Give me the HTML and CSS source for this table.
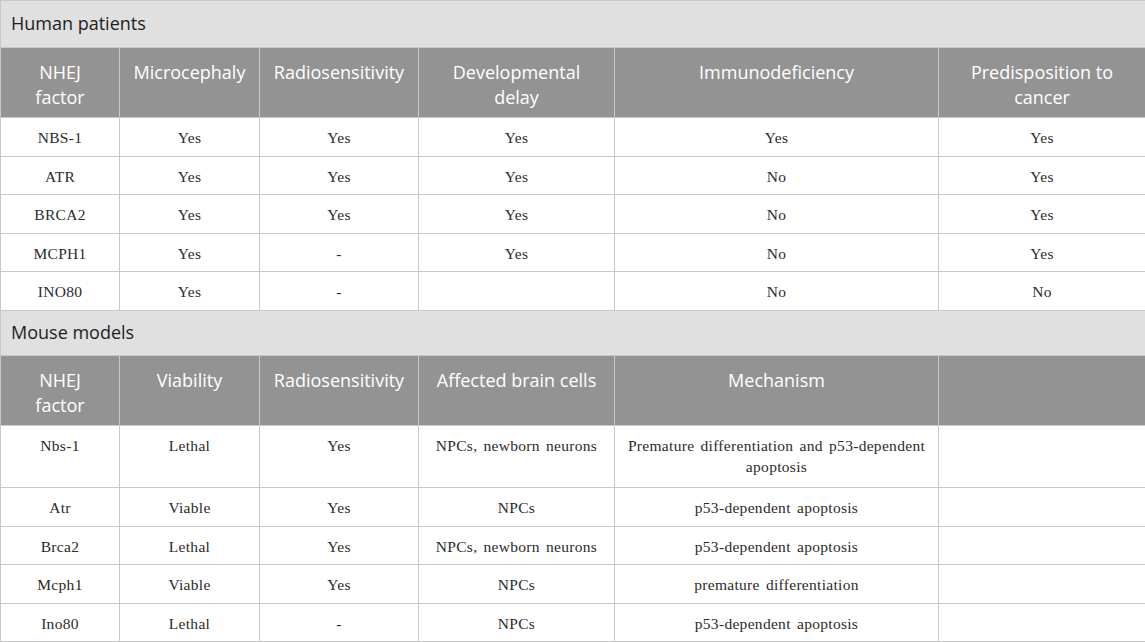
FILE: index.html
```html
<!DOCTYPE html>
<html lang="en">
<head>
    <meta charset="UTF-8">
    <title>NHEJ factors table</title>
    <link rel="stylesheet" href="styles.css">
</head>
<body>

    <table class="data-table">
        <colgroup>
            <col class="c1"><col class="c2"><col class="c3"><col class="c4"><col class="c5"><col class="c6">
        </colgroup>

        <!-- Human patients -->
        <tr class="section first"><td colspan="6">Human patients</td></tr>
        <tr class="head">
            <th>NHEJ factor</th>
            <th>Microcephaly</th>
            <th>Radiosensitivity</th>
            <th>Developmental delay</th>
            <th>Immunodeficiency</th>
            <th>Predisposition to cancer</th>
        </tr>
        <tr><td>NBS-1</td><td>Yes</td><td>Yes</td><td>Yes</td><td>Yes</td><td>Yes</td></tr>
        <tr><td>ATR</td><td>Yes</td><td>Yes</td><td>Yes</td><td>No</td><td>Yes</td></tr>
        <tr><td>BRCA2</td><td>Yes</td><td>Yes</td><td>Yes</td><td>No</td><td>Yes</td></tr>
        <tr><td>MCPH1</td><td>Yes</td><td>-</td><td>Yes</td><td>No</td><td>Yes</td></tr>
        <tr><td>INO80</td><td>Yes</td><td>-</td><td></td><td>No</td><td>No</td></tr>

        <!-- Mouse models -->
        <tr class="section"><td colspan="6">Mouse models</td></tr>
        <tr class="head">
            <th>NHEJ factor</th>
            <th>Viability</th>
            <th>Radiosensitivity</th>
            <th>Affected brain cells</th>
            <th>Mechanism</th>
            <th></th>
        </tr>
        <tr class="tall"><td>Nbs-1</td><td>Lethal</td><td>Yes</td><td>NPCs, newborn neurons</td><td>Premature differentiation and p53-dependent apoptosis</td><td></td></tr>
        <tr><td>Atr</td><td>Viable</td><td>Yes</td><td>NPCs</td><td>p53-dependent apoptosis</td><td></td></tr>
        <tr><td>Brca2</td><td>Lethal</td><td>Yes</td><td>NPCs, newborn neurons</td><td>p53-dependent apoptosis</td><td></td></tr>
        <tr><td>Mcph1</td><td>Viable</td><td>Yes</td><td>NPCs</td><td>premature differentiation</td><td></td></tr>
        <tr><td>Ino80</td><td>Lethal</td><td>-</td><td>NPCs</td><td>p53-dependent apoptosis</td><td></td></tr>
    </table>

</body>
</html>
```

FILE: styles.css
```css
/* Page */
body {
    margin: 0;
    padding: 0;
    background-color: #ffffff;
}

/* Table */
.data-table {
    width: 1145px;
    border-collapse: collapse;
    table-layout: fixed;
    font-family: "Liberation Serif", "Times New Roman", serif;
    font-size: 15.5px;
    letter-spacing: 0.3px;
    word-spacing: 2px;
    color: #2b2b2b;
}

.c1 { width: 119px; }
.c2 { width: 140px; }
.c3 { width: 159px; }
.c4 { width: 196px; }
.c5 { width: 324px; }
.c6 { width: 207px; }

.data-table td,
.data-table th {
    border: 1px solid #c8c8c8;
    text-align: center;
    vertical-align: top;
    padding: 9px 10px 0;
    height: 28.6px;
    line-height: 21px;
}

/* Section title rows */
.section td {
    background-color: #dfe0df;
    font-family: "Open Sans", "Noto Sans", sans-serif;
    font-size: 18px;
    letter-spacing: 0;
    word-spacing: 0;
    color: #1e1e1e;
    text-align: left;
    vertical-align: middle;
    padding: 0 0 0 10px;
    height: 44px;
}

.section.first td {
    height: 45.5px;
}

/* Column header rows */
.head th {
    background-color: #939393;
    color: #ffffff;
    font-family: "Open Sans", "Noto Sans", sans-serif;
    font-size: 18px;
    font-weight: normal;
    letter-spacing: 0;
    word-spacing: 0;
    line-height: 25px;
    height: 57.5px;
    padding: 12px 13px 0;
}

.tall td {
    height: 51.5px;
}
```
